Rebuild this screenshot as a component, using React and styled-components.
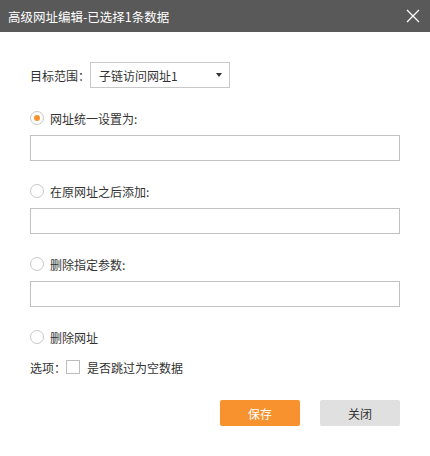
import React, { useState } from "react";
import styled, { createGlobalStyle } from "styled-components";

const GlobalStyle = createGlobalStyle`
  body {
    margin: 0;
    background: #fff;
    font-family: "Microsoft YaHei", "Noto Sans CJK SC", "Liberation Sans", sans-serif;
  }
`;

const Dialog = styled.div`
  width: 430px;
  height: 456px;
  background: #fff;
  color: #333;
  font-size: 12px;
`;

const Header = styled.div`
  height: 32px;
  background: #595959;
  color: #fff;
  display: flex;
  align-items: center;
  justify-content: space-between;
  padding: 0 10px 0 8px;
  font-size: 12.5px;
`;

const CloseBtn = styled.button`
  width: 14px;
  height: 14px;
  padding: 0;
  border: 0;
  background: none;
  display: flex;
  cursor: pointer;
`;

const Body = styled.div`
  padding: 30px 30px 0 30px;
  display: flex;
  flex-direction: column;
`;

const TargetRow = styled.div`
  display: flex;
  align-items: center;
  height: 26px;
  margin-bottom: 20px;
`;

const Label = styled.span`
  white-space: nowrap;
`;

const Select = styled.div`
  box-sizing: border-box;
  width: 140px;
  height: 26px;
  border: 1px solid #c8c8c8;
  display: flex;
  align-items: center;
  justify-content: space-between;
  padding: 0 7px 0 8px;
`;

const Caret = styled.span`
  width: 0;
  height: 0;
  border-left: 3px solid transparent;
  border-right: 3px solid transparent;
  border-top: 4px solid #333;
`;

const RadioRow = styled.label`
  display: flex;
  align-items: center;
  height: 20px;
  gap: 6px;
  cursor: pointer;
`;

const RadioCircle = styled.span`
  box-sizing: border-box;
  width: 14px;
  height: 14px;
  border-radius: 50%;
  border: 1px solid #c8c8c8;
  background: #fff;
  display: flex;
  align-items: center;
  justify-content: center;
  &::after {
    content: "";
    width: 6px;
    height: 6px;
    border-radius: 50%;
    background: ${(p) => (p.$checked ? "#f7922f" : "transparent")};
  }
`;

const TextInput = styled.input`
  box-sizing: border-box;
  width: 370px;
  height: 26px;
  margin: 7px 0 20px;
  border: 1px solid #c2c2c2;
  outline: none;
  padding: 0 6px;
  font: inherit;
`;

const OptionRow = styled.div`
  display: flex;
  align-items: center;
  height: 20px;
  margin-top: 10px;
`;

const CheckBox = styled.span`
  box-sizing: border-box;
  width: 14px;
  height: 14px;
  border: 1px solid #bdbdbd;
  margin-right: 7px;
`;

const Footer = styled.div`
  display: flex;
  justify-content: flex-end;
  gap: 20px;
  margin-top: 23px;
`;

const Button = styled.button`
  width: 80px;
  height: 26px;
  border: 0;
  border-radius: 2px;
  font: inherit;
  font-size: 12px;
  cursor: pointer;
  background: ${(p) => (p.$primary ? "#f7922f" : "#e0e0e0")};
  color: ${(p) => (p.$primary ? "#fff" : "#333")};
`;

const options = [
  { key: "set", text: "网址统一设置为:", input: true },
  { key: "append", text: "在原网址之后添加:", input: true },
  { key: "remove", text: "删除指定参数:", input: true },
  { key: "delete", text: "删除网址", input: false },
];

export default function App() {
  const [mode, setMode] = useState("set");

  return (
    <>
      <GlobalStyle />
      <Dialog>
        <Header>
          <span>高级网址编辑-已选择1条数据</span>
          <CloseBtn aria-label="关闭">
            <svg width="14" height="14" viewBox="0 0 14 14">
              <path d="M1 1L13 13M13 1L1 13" stroke="#fff" strokeWidth="1.3" />
            </svg>
          </CloseBtn>
        </Header>
        <Body>
          <TargetRow>
            <Label>目标范围：</Label>
            <Select>
              <span>子链访问网址1</span>
              <Caret />
            </Select>
          </TargetRow>
          {options.map((o) => (
            <React.Fragment key={o.key}>
              <RadioRow onClick={() => setMode(o.key)}>
                <RadioCircle $checked={mode === o.key} />
                <span>{o.text}</span>
              </RadioRow>
              {o.input && <TextInput type="text" />}
            </React.Fragment>
          ))}
          <OptionRow>
            <Label>选项：</Label>
            <CheckBox />
            <span>是否跳过为空数据</span>
          </OptionRow>
          <Footer>
            <Button $primary>保存</Button>
            <Button>关闭</Button>
          </Footer>
        </Body>
      </Dialog>
    </>
  );
}
